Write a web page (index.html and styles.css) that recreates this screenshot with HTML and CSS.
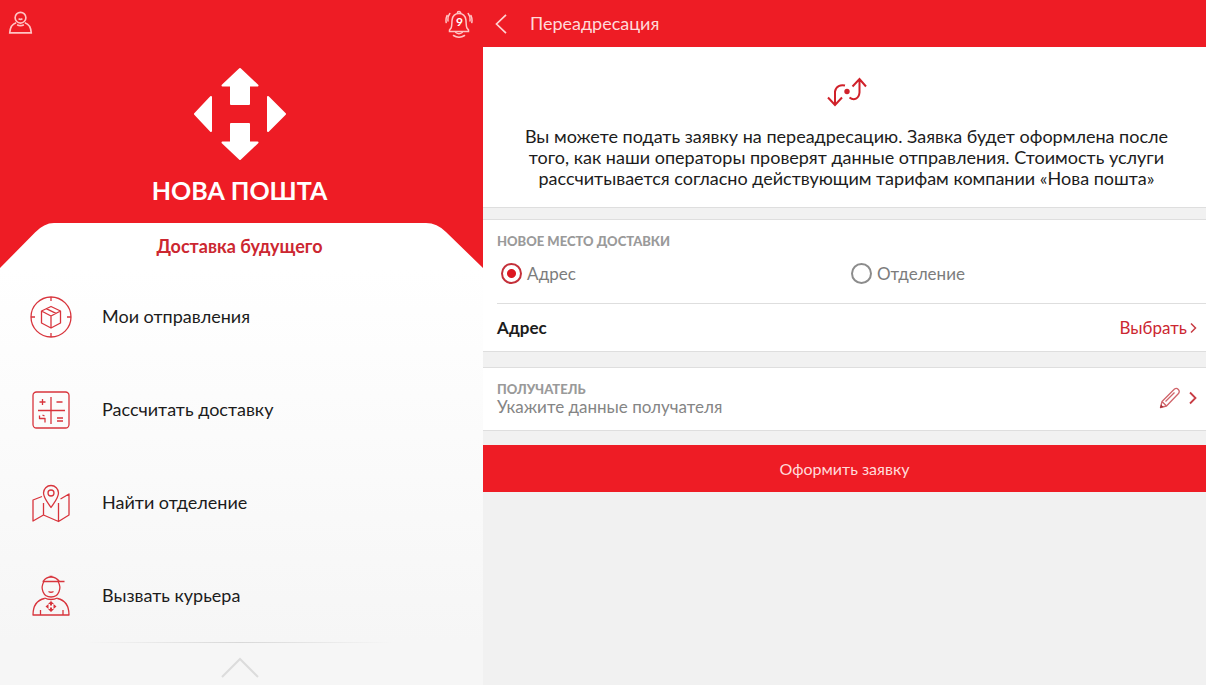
FILE: index.html
```html
<!DOCTYPE html>
<html lang="ru">
<head>
<meta charset="utf-8">
<meta name="viewport" content="width=device-width, initial-scale=1">
<title>Нова Пошта — Переадресация</title>
<link rel="stylesheet" href="styles.css">
</head>
<body>
<div class="app">
  <aside class="home">
    <header class="home-bar">
      <button class="icon-button" type="button" aria-label="Профиль">
        <svg class="profile-icon" width="26" height="26" viewBox="0 0 26 26" fill="none" stroke="#ffc4c4" stroke-width="1.7">
          <circle cx="13" cy="7.500" r="5.600"/>
          <path d="M8.500 12.800C4.500 14 2.200 17 1.800 23.200h22.400c-.4-6.200-2.700-9.200-6.700-10.400M9.500 14.800q3.500 2 7 0"/>
          <path d="M11 8.500q2 1.600 4 0"/>
        </svg>
      </button>
      <button class="icon-button" type="button" aria-label="Уведомления: 9">
        <svg width="28" height="30" viewBox="0 0 28 30" fill="none" stroke="#ffc4c4" stroke-width="1.500" stroke-linecap="round">
          <path d="M4.500 23.500h19v-1.500l-1.700-2.200c-.8-2-.5-5-.9-8C20.300 7.800 18 5.500 14 5.500S7.700 7.800 7.100 11.800c-.4 3-.1 6-.9 8L4.500 22z"/>
          <path d="M12.300 5.300a1.700 1.700 0 0 1 3.400 0M8.500 27.500q5.500 3.500 11 0M10.800 24.500q3.200 2.500 6.400 0M4.800 5.500Q2.500 8.500 3 13M2 7.500Q.5 11 1.200 14.500M23.200 5.500Q25.500 8.500 25 13M26 7.500q1.500 3.500.8 7"/>
          <text class="bell-count" x="14.500" y="17.500" text-anchor="middle">9</text>
        </svg>
      </button>
    </header>
    <div class="brand">
      <svg width="94" height="94" viewBox="0 0 94 94" fill="#fff" stroke="#fff" stroke-width="2" stroke-linejoin="round">
        <path d="M47 2 64.500 18.500H56V37H38V18.500H29.500z"/>
        <path d="M47 92 64.500 75.500H56V57H38v18.500H29.500z"/>
        <path d="M2 47 18 30v34zM92 47 75 30v34z"/>
      </svg>
      <h1 class="brand-name">НОВА ПОШТА</h1>
    </div>
    <div class="sheet">
      <div class="sheet-top">
        <svg class="sheet-edge" viewBox="0 0 483 46" preserveAspectRatio="none" fill="#fff" aria-hidden="true">
          <path d="M0 46V45L35 9.500Q44 0 54 0H426Q437 0 446 9L483 45v1z"/>
        </svg>
        <p class="tagline">Доставка будущего</p>
      </div>
      <nav class="menu">
        <a class="menu-item" href="#shipments">
          <svg width="42" height="42" viewBox="0 0 42 42" class="line-icon">
            <circle cx="21" cy="21" r="20"/>
            <path d="M21 1v4M21 37v4M1 21h4M37 21h4"/>
            <path d="M21 10.500 30.500 15v12L21 32l-9.500-5V15zM11.500 15 21 20l9.500-5M21 20v12M16.200 12.700 26 17.400"/>
          </svg>
          <span>Мои отправления</span>
        </a>
        <a class="menu-item" href="#calc">
          <svg width="42" height="42" viewBox="0 0 42 42" class="line-icon">
            <rect x="3" y="3" width="36" height="36" rx="3.500"/>
            <path d="M21 8v27M8 21.500h27M9.500 13h6M12.500 10v6M26.500 13h6M27 29h6M27 32h6M9.500 26.500v3h5.500v4M12.500 26l2 1"/>
          </svg>
          <span>Рассчитать доставку</span>
        </a>
        <a class="menu-item" href="#branches">
          <svg width="42" height="42" viewBox="0 0 42 42" class="line-icon">
            <path d="M21 25.500C16.500 19 13.500 15.500 13.500 11a7.500 7.500 0 0 1 15 0c0 4.500-3 8-7.500 14.500z"/>
            <circle cx="21" cy="11" r="3"/>
            <path d="M12 14.500 3 18v21l10.500-6L28.500 39.500 39 33V12l-8.500 5M13.500 21v12M28.500 21v18.500"/>
          </svg>
          <span>Найти отделение</span>
        </a>
        <a class="menu-item" href="#courier">
          <svg width="42" height="42" viewBox="0 0 42 42" class="line-icon">
            <path d="M14 6.500C10 13 13 22 21 22s11-9 7-15.500M12.500 6.500h22M13 6.500Q16 2 21 2t8.500 4.500M19.500 1.500h3M18.500 16.500q2.500 1.500 5 0"/>
            <path d="M14.500 23.500Q3 26 3 40h36q0-14-11.500-16.500M14.500 23q6.500 3 13 0M10.500 35v5M33 35v5"/>
            <path fill="#d8343c" stroke="none" d="M21 26l3 3h-2v1.500h-2V29h-2zM21 37l3-3h-2v-1.500h-2V34h-2zM15.500 31.500l3-2.500v5zM26.500 31.500l-3-2.500v5z"/>
          </svg>
          <span>Вызвать курьера</span>
        </a>
      </nav>
      <footer class="sheet-foot">
        <button class="icon-button" type="button" aria-label="Развернуть меню">
          <svg width="40" height="22" viewBox="0 0 40 22" fill="none" stroke="#dcdcdc" stroke-width="2"><path d="M2 20 20 2l18 18"/></svg>
        </button>
      </footer>
    </div>
  </aside>

  <main class="redirect">
    <header class="page-bar">
      <button class="icon-button" type="button" aria-label="Назад">
        <svg width="12" height="20" viewBox="0 0 12 20" fill="none" stroke="#ffd2d2" stroke-width="1.700"><path d="M11 .8 1.500 10l9.500 9.200"/></svg>
      </button>
      <h2 class="page-title">Переадресация</h2>
    </header>

    <section class="card intro">
      <svg width="40" height="30" viewBox="0 0 40 30" fill="none" stroke="#d0212a" stroke-width="2">
        <path d="M18 8.500C13.500 7.500 9 9 8 14.500V28M1 20.500 8 28l7-7.500M22.500 20.500C27 24 32 21.500 32.500 15.500V2M25.500 9.500 32.500 2l6.500 7.500"/>
        <circle cx="20" cy="14.500" r="2.700" fill="#d0212a" stroke="none"/>
      </svg>
      <p class="intro-text">Вы можете подать заявку на переадресацию. Заявка будет оформлена после того, как наши операторы проверят данные отправления. Стоимость услуги рассчитывается согласно действующим тарифам компании «Нова пошта»</p>
    </section>

    <form class="form">
      <section class="card place">
        <fieldset class="choices">
          <legend class="caption">НОВОЕ МЕСТО ДОСТАВКИ</legend>
          <div class="choice-row">
            <label class="choice"><input type="radio" name="place" checked><span>Адрес</span></label>
            <label class="choice"><input type="radio" name="place"><span>Отделение</span></label>
          </div>
        </fieldset>
        <div class="address">
          <strong class="address-label">Адрес</strong>
          <button class="pick" type="button"><span>Выбрать</span>
            <svg width="7" height="12" viewBox="0 0 7 12" fill="none" stroke="#c83c44" stroke-width="1.500"><path d="M1 1.500 5.500 6 1 10.500"/></svg>
          </button>
        </div>
      </section>

      <section class="card recipient">
        <div>
          <h3 class="caption">ПОЛУЧАТЕЛЬ</h3>
          <p class="hint">Укажите данные получателя</p>
        </div>
        <button class="edit" type="button" aria-label="Изменить получателя">
          <svg width="22" height="22" viewBox="0 0 22 22" fill="none" stroke="#d0646a" stroke-width="1.300" stroke-linejoin="round">
            <path d="M1.500 20.500 3 14.500 15.500 2q2-1.500 3.800.5t.2 4L7.500 19zM6.500 14.500 15.500 5.500M3 14.500 7.500 19"/>
            <path d="M1 21l1-3.500L4.500 20z" fill="#a83038" stroke="none"/>
          </svg>
          <svg width="8" height="14" viewBox="0 0 8 14" fill="none" stroke="#c83c44" stroke-width="1.800"><path d="M1 1.500 6.500 7 1 12.500"/></svg>
        </button>
      </section>

      <button class="submit" type="submit">Оформить заявку</button>
    </form>
  </main>
</div>
</body>
</html>
```

FILE: styles.css
```css
* {
  box-sizing: border-box;
}

body {
  margin: 0;
  font-family: "Lato", "Noto Sans", sans-serif;
  font-size: 17px;
  line-height: 21px;
  color: #1c1c1c;
}

h1, h2, h3, p, fieldset, legend {
  margin: 0;
  padding: 0;
  border: 0;
}

svg {
  display: block;
  flex: none;
}

button {
  margin: 0;
  padding: 0;
  border: 0;
  background: none;
  color: inherit;
  font: inherit;
  cursor: pointer;
}

.app {
  display: grid;
  grid-template-columns: 483fr 723fr;
  min-height: 100vh;
}

.home {
  display: flex;
  flex-direction: column;
  background: #ee1c25;
}

.home-bar {
  display: flex;
  justify-content: space-between;
  align-items: center;
  height: 45px;
  padding: 0 10px 0 8px;
}

.profile-icon {
  width: 25px;
}

.bell-count {
  fill: #fff;
  stroke: none;
  font-size: 12px;
  font-weight: 700;
}

.brand {
  display: flex;
  flex-direction: column;
  align-items: center;
  gap: 14px;
  padding: 22px 4px 18px 0;
}

.brand-name {
  color: #fff;
  font-size: 25px;
  line-height: 30px;
  font-weight: 700;
}

.sheet {
  display: flex;
  flex-direction: column;
  flex: 1;
}

.sheet-top {
  display: grid;
  height: 46px;
}

.sheet-edge {
  grid-area: 1 / 1;
  width: 100%;
  height: 46px;
}

.tagline {
  grid-area: 1 / 1;
  align-self: center;
  padding-right: 4px;
  text-align: center;
  color: #cc2731;
  font-size: 18px;
  font-weight: 700;
}

.menu {
  padding: 1px 30px 0;
  background: linear-gradient(#fff, #f6f6f6);
}

.menu-item {
  display: flex;
  align-items: center;
  gap: 30px;
  height: 93px;
  color: inherit;
  font-size: 18px;
  text-decoration: none;
}

.line-icon {
  fill: none;
  stroke: #d8343c;
  stroke-width: 1.3px;
  stroke-linejoin: round;
}

.sheet-foot {
  display: flex;
  flex: 1;
  flex-direction: column;
  align-items: center;
  gap: 14px;
  padding-right: 4px;
  background: #f6f6f6;
}

.sheet-foot::before {
  content: "";
  width: 64%;
  height: 1px;
  background: linear-gradient(90deg, #f6f6f6, #d8d8d8, #f6f6f6);
}

.redirect {
  background: #f1f1f1;
}

.page-bar {
  display: flex;
  align-items: center;
  gap: 23px;
  height: 47px;
  padding: 0 12px;
  background: #ee1c25;
}

.page-title {
  color: #ffdada;
  font-size: 18px;
  font-weight: 400;
}

.card {
  background: #fff;
  border-bottom: 1px solid #dedede;
}

.intro {
  display: flex;
  flex-direction: column;
  align-items: center;
  gap: 19px;
  padding: 30px 32px 18px 36px;
}

.intro-text {
  max-width: 655px;
  font-size: 18px;
  text-align: center;
}

.form {
  display: flex;
  flex-direction: column;
}

.place {
  margin-top: 11px;
  padding-left: 14px;
  border-top: 1px solid #dedede;
}

.choices {
  min-width: 0;
  height: 84px;
  border-bottom: 1px solid #dedede;
}

.caption {
  color: #9a9a9a;
  font-size: 13px;
  line-height: 18px;
  font-weight: 900;
}

.choices .caption {
  padding-top: 12px;
}

.choice-row {
  display: grid;
  grid-template-columns: 350px 1fr;
  padding-top: 13px;
}

.choice {
  display: flex;
  align-items: center;
  gap: 5px;
  padding-left: 4px;
  color: #7c7c7c;
}

.choice input {
  appearance: none;
  width: 21px;
  height: 21px;
  margin: 0;
  border: 2px solid #8c8c8c;
  border-radius: 50%;
}

.choice input:checked {
  border-color: #c4303a;
  background: radial-gradient(circle, #dd1822 4px, #fff 5px);
}

.address {
  display: flex;
  justify-content: space-between;
  align-items: center;
  height: 47px;
  padding-right: 9px;
}

.address-label {
  font-weight: 700;
}

.pick {
  display: flex;
  align-items: center;
  gap: 3px;
  color: #cc2731;
}

.recipient {
  display: flex;
  justify-content: space-between;
  align-items: center;
  height: 64px;
  margin-top: 15px;
  padding: 0 9px 3px 14px;
  border-top: 1px solid #dedede;
}

.hint {
  color: #858585;
  line-height: 18px;
}

.edit {
  display: flex;
  align-items: center;
  gap: 8px;
}

.submit {
  height: 47px;
  margin-top: 14px;
  background: #ee1c25;
  color: #ffdada;
  font-size: 16px;
}
```
